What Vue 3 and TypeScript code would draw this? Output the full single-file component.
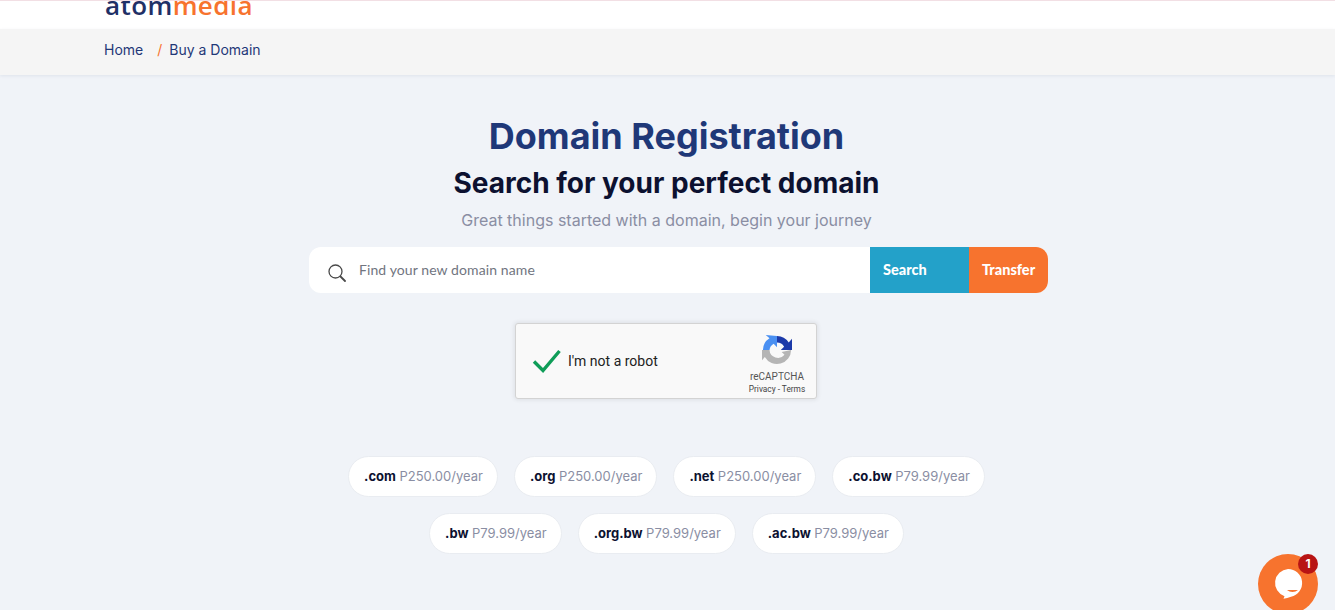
<script setup lang="ts">
interface Tld { name: string; price: string }
const rows: Tld[][] = [
  [
    { name: '.com', price: 'P250.00/year' },
    { name: '.org', price: 'P250.00/year' },
    { name: '.net', price: 'P250.00/year' },
    { name: '.co.bw', price: 'P79.99/year' },
  ],
  [
    { name: '.bw', price: 'P79.99/year' },
    { name: '.org.bw', price: 'P79.99/year' },
    { name: '.ac.bw', price: 'P79.99/year' },
  ],
]
</script>

<template>
  <div class="page">
    <header class="top">
      <div class="logo"><span class="atom">atom</span><span class="media">media</span></div>
    </header>
    <nav class="crumbs">
      <span class="crumb">Home</span>
      <span class="sep">/</span>
      <span class="crumb">Buy a Domain</span>
    </nav>
    <main class="main">
      <h1 class="title">Domain Registration</h1>
      <h2 class="subtitle">Search for your perfect domain</h2>
      <p class="tag">Great things started with a domain, begin your journey</p>
      <div class="search">
        <div class="field">
          <svg class="glass" width="18" height="18" viewBox="0 0 18 18" fill="none">
            <circle cx="7.500" cy="7.500" r="6.500" stroke="#4a4a4a" stroke-width="1.300" />
            <path d="M12.500 12.500l4.500 4.500" stroke="#4a4a4a" stroke-width="1.800" stroke-linecap="round" />
          </svg>
          <span class="placeholder">Find your new domain name</span>
        </div>
        <button class="btn search-btn">Search</button>
        <button class="btn transfer-btn">Transfer</button>
      </div>
      <div class="captcha">
        <svg class="check" width="30" height="24" viewBox="0 0 30 24" fill="none">
          <path d="M2 12.500l9 9L27.500 2" stroke="#0f9d58" stroke-width="3.400" />
        </svg>
        <span class="robot">I'm not a robot</span>
        <div class="brand">
          <svg width="30" height="30" viewBox="0 0 32 32" fill="none">
            <path d="M1 16A15 15 0 0 1 8 3.500L4 0l12 1v12l-3.600-3.600A9 9 0 0 0 8 16z" fill="#4a90f2" />
            <path d="M16 1A15 15 0 0 1 28.500 8L32 4v12H20l3.600-3.600A9 9 0 0 0 16 8z" fill="#1c3aa9" />
            <path d="M31 16A15 15 0 0 1 3 23.500L0 27V16h8a9 9 0 0 0 16 5l-3-3z" fill="#b5b5b5" />
          </svg>
          <div class="cap-name">reCAPTCHA</div>
          <div class="cap-links">Privacy - Terms</div>
        </div>
      </div>
      <div class="tlds">
        <div v-for="(row, i) in rows" :key="i" class="tld-row">
          <div v-for="t in row" :key="t.name" class="pill">
            <b>{{ t.name }}</b> <span>{{ t.price }}</span>
          </div>
        </div>
      </div>
    </main>
    <div class="chat">
      <svg width="44" height="44" viewBox="0 0 44 44">
        <path d="M22 7a14 14 0 0 1 3 27.700c-2.600 1-5 1.600-7.500 2l1-2.500A14 14 0 0 1 22 7z" fill="#fff" />
        <path d="M21 28c3 2.500 8 2.500 11 0z" fill="#f7732e" />
      </svg>
    </div>
    <div class="badge">1</div>
  </div>
</template>

<style>
html, body { margin: 0; background: #f0f3f8; }
</style>

<style scoped>
.page {
  position: relative;
  height: 610px;
  overflow: hidden;
  background: #f0f3f8;
  font-family: Inter, "Liberation Sans", sans-serif;
}
.top {
  height: 28px;
  background: #fff;
  border-top: 1px solid #f2dfe4;
  padding-left: 105px;
  overflow: hidden;
}
.logo {
  margin-top: -12px;
  font-family: "Open Sans", sans-serif;
  font-size: 26px;
  line-height: 32px;
  font-weight: 600;
  letter-spacing: 0.4px;
}
.atom { color: #1f3066; }
.media { color: #f7732e; font-weight: 600; }
.crumbs {
  height: 46px;
  box-sizing: border-box;
  display: flex;
  align-items: center;
  padding: 0 0 6px 104px;
  background: #f5f5f5;
  box-shadow: 0 1px 3px rgba(30, 50, 90, 0.08);
  font-size: 14px;
  color: #1f3878;
}
.sep { color: #f7732e; margin: 0 7px 0 14px; }
.main {
  display: flex;
  flex-direction: column;
  align-items: center;
  padding-right: 2px;
}
.title {
  margin: 38px 0 0;
  font-size: 36px;
  line-height: 46px;
  font-weight: 700;
  color: #1f3878;
}
.subtitle {
  margin: 4px 0 0;
  font-size: 28px;
  line-height: 40px;
  font-weight: 700;
  color: #0c1130;
}
.tag {
  margin: 6px 0 0;
  font-size: 16px;
  line-height: 22px;
  color: #8a8ea3;
}
.search {
  display: flex;
  width: 739px;
  height: 46px;
  margin: 16px 0 0 24px;
  border-radius: 12px;
  overflow: hidden;
  background: #fff;
}
.field {
  flex: 1;
  display: flex;
  align-items: center;
  padding-left: 19px;
  gap: 13px;
}
.glass { margin-top: 5px; }
.placeholder {
  font-family: Lato, sans-serif;
  font-size: 14px;
  letter-spacing: 0.1px;
  color: #71757f;
  margin-bottom: 2px;
}
.btn {
  border: 0;
  color: #fff;
  font-family: Lato, sans-serif;
  font-weight: 900;
  font-size: 14.500px;
  text-align: left;
  padding: 0 0 2px 13px;
}
.search-btn { width: 99px; background: #23a1c9; }
.transfer-btn { width: 79px; background: #f7732e; padding-left: 13px; }
.captcha {
  display: flex;
  align-items: center;
  box-sizing: border-box;
  width: 302px;
  height: 76px;
  margin: 30px 1px 0 0;
  background: #f9f9f9;
  border: 1px solid #d3d3d3;
  border-radius: 3px;
  box-shadow: 0 0 4px 1px rgba(0, 0, 0, 0.08);
  padding-left: 16px;
  position: relative;
}
.robot {
  margin-left: 6px;
  font-family: Roboto, sans-serif;
  font-size: 14px;
  color: #222;
}
.brand {
  position: absolute;
  right: 9px;
  top: 11px;
  width: 60px;
  display: flex;
  flex-direction: column;
  align-items: center;
  font-family: Roboto, sans-serif;
  color: #555;
}
.cap-name { font-size: 10px; line-height: 12px; margin-top: 6px; }
.cap-links { font-size: 8.300px; line-height: 12px; margin-top: 0; color: #444; white-space: nowrap; }
.tlds {
  margin-top: 57px;
  display: flex;
  flex-direction: column;
  gap: 16px;
  align-items: center;
}
.tld-row { display: flex; gap: 16px; }
.pill {
  height: 41px;
  box-sizing: border-box;
  display: flex;
  align-items: center;
  gap: 3.500px;
  padding: 0 14px 2px 15px;
  background: #fff;
  border: 1px solid #e9ecf1;
  border-radius: 21px;
  font-size: 13px;
  color: #8a8ea3;
  white-space: nowrap;
}
.pill b { color: #0c1130; font-weight: 700; }
.chat {
  position: absolute;
  left: 1258px;
  top: 554px;
  width: 60px;
  height: 60px;
  border-radius: 50%;
  background: #f7732e;
  display: flex;
  align-items: center;
  justify-content: center;
}
.badge {
  position: absolute;
  left: 1298px;
  top: 554px;
  width: 20px;
  height: 20px;
  border-radius: 50%;
  background: #b81414;
  color: #fff;
  font-size: 12px;
  font-weight: 700;
  line-height: 20px;
  text-align: center;
}
</style>
